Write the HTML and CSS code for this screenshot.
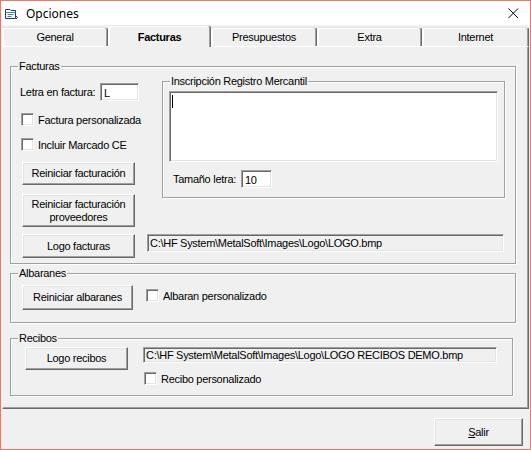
FILE: index.html
```html
<!DOCTYPE html>
<html>
<head>
<meta charset="utf-8">
<link rel="stylesheet" href="styles.css">
</head>
<body>
<div class="window">
  <div class="titlebar">
    <svg class="appicon" width="13" height="12" viewBox="0 0 13 12">
      <path d="M0.5 1.5 H5 L6 2.5 H10.5 V10.5 H0.5 Z" fill="#ffffff" stroke="#1b3a78"/>
      <path d="M0.5 4.5 H10.5" stroke="#3d7fd6"/>
      <path d="M2.5 6.5 H8.5 M2.5 8.5 H6.5" stroke="#3d7fd6"/>
      <path d="M11 8 L12.5 9.5 L11 11" fill="none" stroke="#1b3a78"/>
    </svg>
    <span class="title">Opciones</span>
    <svg class="close" width="11" height="11" viewBox="0 0 11 11">
      <path d="M0.5 0.5 L10 10 M10 0.5 L0.5 10" stroke="#000" stroke-width="1"/>
    </svg>
  </div>
  <div class="tabs">
    <div class="tab t1">General</div>
    <div class="tab t2 active">Facturas</div>
    <div class="tab t3">Presupuestos</div>
    <div class="tab t4">Extra</div>
    <div class="tab t5">Internet</div>
  </div>
  <div class="panel">
    <fieldset class="group g-facturas">
      <legend>Facturas</legend>
      <div class="fact-top">
        <div class="left-col">
          <div class="field-row letra-row">
            <span class="lbl lbl-letra">Letra en factura:</span>
            <span class="input in-letra">L</span>
          </div>
          <div class="check check-a"><span class="box"></span><span>Factura personalizada</span></div>
          <div class="check check-b"><span class="box"></span><span>Incluir Marcado CE</span></div>
          <button class="btn btn-reinic">Reiniciar facturación</button>
          <button class="btn btn-prov">Reiniciar facturación<br>proveedores</button>
        </div>
        <fieldset class="group g-insc">
          <legend>Inscripción Registro Mercantil</legend>
          <div class="textarea"><span class="caret"></span></div>
          <div class="field-row tam-row">
            <span class="lbl lbl-tam">Tamaño letra:</span>
            <span class="input in-tam">10</span>
          </div>
        </fieldset>
      </div>
      <div class="fact-bottom">
        <button class="btn btn-logo">Logo facturas</button>
        <div class="path path-fact">C:\HF System\MetalSoft\Images\Logo\LOGO.bmp</div>
      </div>
    </fieldset>

    <fieldset class="group g-alb">
      <legend>Albaranes</legend>
      <div class="alb-row">
        <button class="btn btn-alb">Reiniciar albaranes</button>
        <div class="check check-alb"><span class="box"></span><span>Albaran personalizado</span></div>
      </div>
    </fieldset>

    <fieldset class="group g-rec">
      <legend>Recibos</legend>
      <div class="rec-row">
        <button class="btn btn-rec">Logo recibos</button>
        <div class="rec-col">
          <div class="path path-rec">C:\HF System\MetalSoft\Images\Logo\LOGO RECIBOS DEMO.bmp</div>
          <div class="check check-rec"><span class="box"></span><span>Recibo personalizado</span></div>
        </div>
      </div>
    </fieldset>
  </div>
  <div class="footer">
    <button class="btn btn-salir"><u>S</u>alir</button>
  </div>
</div>
</body>
</html>
```
FILE: styles.css
```css
* { box-sizing: border-box; }
html, body { margin: 0; padding: 0; }
body {
  width: 531px;
  height: 450px;
  overflow: hidden;
  font-family: "Liberation Sans", Arial, sans-serif;
  font-size: 11px;
  letter-spacing: -0.28px;
  color: #000;
  background: #f0f0f0;
}
.window {
  width: 531px;
  height: 450px;
  border: 1px solid #ee7863;
  background: #f0f0f0;
  display: flex;
  flex-direction: column;
}
.titlebar {
  height: 24px;
  background: #fff;
  display: flex;
  align-items: center;
  flex: none;
  letter-spacing: 0;
}
.appicon { margin-left: 4px; margin-top: 1px; flex: none; }
.title {
  margin-left: 8px;
  font-family: "Noto Sans", "Liberation Sans", sans-serif;
  font-size: 12px;
  margin-top: 1px;
}
.close { margin-left: auto; margin-right: 11px; margin-top: 1px; }

.tabs {
  height: 21px;
  display: flex;
  padding-left: 1px;
  flex: none;
  align-items: flex-end;
}
.tab {
  height: 19px;
  background: #f0f0f0;
  border-top: 1px solid #e3e3e3;
  border-left: 1px solid #fff;
  border-right: 1px solid #696969;
  box-shadow: inset -1px 0 0 #a0a0a0, inset 1px 1px 0 #fff;
  border-radius: 3px 3px 0 0;
  display: flex;
  align-items: center;
  justify-content: center;
  padding-bottom: 1px;
}
.t1 { width: 106px; }
.t2 { width: 103px; }
.t3 { width: 106px; }
.t4 { width: 105px; }
.t5 { width: 107px; }
.tab.active {
  height: 22px;
  margin-bottom: -1px;
  font-weight: bold;
  position: relative;
  z-index: 1;
  padding-bottom: 0;
  padding-top: 1px;
}

.panel {
  width: 527px;
  height: 363px;
  margin-left: 1px;
  border: 1px solid;
  border-color: #fff #696969 #696969 #fff;
  box-shadow: inset -1px -1px 0 #a0a0a0;
  display: flex;
  flex-direction: column;
  flex: none;
}

.group {
  margin: 0;
  padding: 0;
  min-width: 0;
  border: 1px solid #a0a0a0;
  box-shadow: 1px 1px 0 #fff, inset 1px 1px 0 #fff;
}
.group > legend {
  padding: 0 1px;
  margin-left: 7px;
  line-height: 13px;
  height: 13px;
  background: #f0f0f0;
}
.g-facturas {
  margin: 13px 0 0 7px;
  width: 506px;
  height: 204px;
}
.fact-top { display: flex; height: 154px; }
.left-col {
  width: 151px;
  padding-left: 9px;
  display: flex;
  flex-direction: column;
  align-items: flex-start;
}
.field-row { display: flex; align-items: center; height: 18px; }
.letra-row { margin-top: 10px; }
.lbl { white-space: nowrap; }
.lbl-letra { width: 80px; }
.input {
  background: #fff;
  height: 18px;
  border: 1px solid;
  border-color: #a0a0a0 #fff #fff #a0a0a0;
  box-shadow: inset 1px 1px 0 #696969, inset -1px -1px 0 #e3e3e3;
  display: flex;
  align-items: center;
  padding-left: 3px;
  padding-top: 1px;
}
.in-letra { width: 39px; }
.check {
  display: flex;
  align-items: center;
  height: 13px;
  white-space: nowrap;
}
.check .box {
  width: 13px;
  height: 13px;
  background: #fff;
  border: 1px solid;
  border-color: #a0a0a0 #fff #fff #a0a0a0;
  box-shadow: inset 1px 1px 0 #696969, inset -1px -1px 0 #e3e3e3;
  margin-right: 4px;
  flex: none;
}
.check-a { margin-top: 12px; margin-left: 1px; }
.check-b { margin-top: 12px; margin-left: 1px; }

.btn {
  font-family: inherit;
  font-size: 11px;
  letter-spacing: -0.28px;
  color: #000;
  background: #f0f0f0;
  padding: 0;
  margin: 0;
  line-height: 13px;
  border: 1px solid;
  border-color: #fff #696969 #696969 #fff;
  box-shadow: inset -1px -1px 0 #a0a0a0, inset 1px 1px 0 #e3e3e3;
  border-radius: 0;
  text-align: center;
  flex: none;
}
.btn-reinic { margin-top: 11px; margin-left: 2px; width: 113px; height: 23px; }
.btn-prov { margin-top: 9px; margin-left: 2px; width: 113px; height: 33px; }

.g-insc {
  margin-top: 2px;
  width: 343px;
  height: 123px;
}
.textarea {
  margin: 3px 0 0 6px;
  width: 329px;
  height: 71px;
  background: #fff;
  border: 1px solid;
  border-color: #a0a0a0 #fff #fff #a0a0a0;
  box-shadow: inset 1px 1px 0 #696969, inset -1px -1px 0 #e3e3e3;
  padding: 3px 0 0 2px;
}
.caret { display: block; width: 1px; height: 13px; background: #000; }
.tam-row { margin-top: 8px; padding-left: 10px; }
.lbl-tam { width: 68px; }
.in-tam { width: 31px; }

.fact-bottom { display: flex; align-items: flex-start; margin-top: 7px; }
.btn-logo { margin-left: 11px; width: 113px; height: 24px; }
.path {
  background: #f0f0f0;
  border: 1px solid;
  border-color: #a0a0a0 #fff #fff #a0a0a0;
  box-shadow: inset 1px 1px 0 #696969, inset -1px -1px 0 #e3e3e3;
  padding-left: 2px;
  display: flex;
  align-items: center;
  white-space: nowrap;
  overflow: hidden;
}
.path-fact { margin-left: 12px; width: 357px; height: 18px; }

.g-alb {
  margin: 3px 0 0 7px;
  width: 506px;
  height: 56px;
}
.alb-row { display: flex; align-items: flex-start; margin-top: 5px; }
.btn-alb { margin-left: 11px; width: 111px; height: 25px; }
.check-alb { margin-left: 13px; margin-top: 4px; }

.g-rec {
  margin: 9px 0 0 7px;
  width: 503px;
  height: 64px;
}
.rec-row { display: flex; align-items: flex-start; margin-top: 2px; }
.btn-rec { margin-left: 14px; width: 103px; height: 23px; }
.rec-col { margin-left: 15px; display: flex; flex-direction: column; }
.path-rec { width: 354px; height: 16px; }
.check-rec { margin-top: 9px; margin-left: 1px; }

.footer {
  flex: none;
  height: 40px;
  display: flex;
  justify-content: flex-end;
  align-items: flex-start;
  padding-right: 7px;
  padding-top: 9px;
}
.btn-salir { width: 89px; height: 28px; }
.btn-salir u { text-decoration: underline; }
```
